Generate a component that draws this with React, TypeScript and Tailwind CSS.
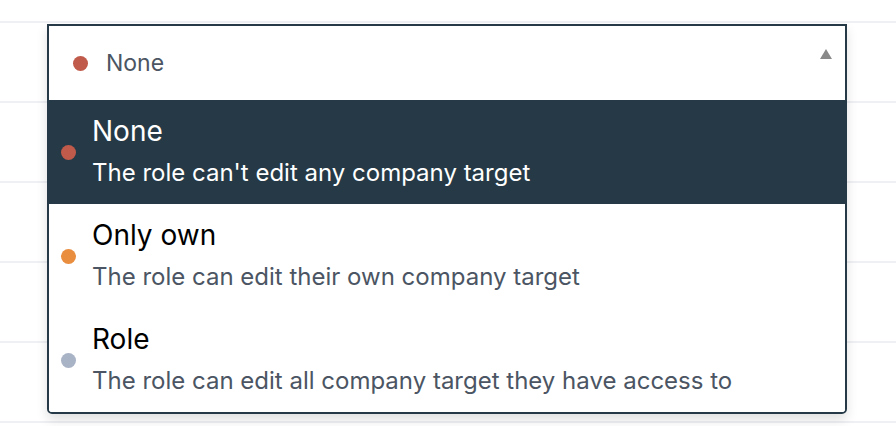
const options = [
  {
    label: "None",
    description: "The role can't edit any company target",
    dot: "bg-[#c05a4a]",
  },
  {
    label: "Only own",
    description: "The role can edit their own company target",
    dot: "bg-[#e98d3f]",
  },
  {
    label: "Role",
    description: "The role can edit all company target they have access to",
    dot: "bg-[#a9b3c6]",
  },
];

const App = () => {
  const selected = 0;

  return (
    <div className="relative w-[896px] h-[426px] overflow-hidden bg-white font-['Inter',sans-serif]">
      {/* table rows behind the popover */}
      <div className="flex flex-col">
        <div className="h-[23px] border-b-2 border-[#eef0f4]" />
        {[0, 1, 2, 3, 4].map((i) => (
          <div key={i} className="h-[80px] border-b-2 border-[#eef0f4]" />
        ))}
      </div>

      <div className="absolute left-[47px] top-[24px] w-[800px] border-2 border-[#253a46] rounded-b-[5px] bg-white shadow-[0_6px_12px_rgba(0,0,0,0.12)] overflow-hidden">
        <div className="h-[74px] flex items-center pl-6 pr-[13px]">
          <span className={`w-[15px] h-[15px] rounded-full ${options[selected].dot}`} />
          <span className="ml-[18px] text-[23px] text-[#4b5563]">
            {options[selected].label}
          </span>
          <svg className="ml-auto mb-[18px]" width="12" height="10" viewBox="0 0 12 10">
            <path d="M6 0 L12 10 L0 10 Z" fill="#8a8a8a" />
          </svg>
        </div>

        {options.map((opt, i) => (
          <div
            key={opt.label}
            className={`h-[104px] flex items-center pl-3 ${
              i === selected ? "bg-[#253a46]" : "bg-white"
            }`}
          >
            <span className={`w-[15px] h-[15px] rounded-full shrink-0 ${opt.dot}`} />
            <div className="ml-4 flex flex-col gap-[6px]">
              <span
                className={`text-[28px] leading-[36px] ${
                  i === selected ? "text-white" : "text-black"
                }`}
              >
                {opt.label}
              </span>
              <span
                className={`text-[24px] leading-[36px] ${
                  i === selected ? "text-white" : "text-[#4b5563]"
                }`}
              >
                {opt.description}
              </span>
            </div>
          </div>
        ))}
      </div>
    </div>
  );
};

export default App;
